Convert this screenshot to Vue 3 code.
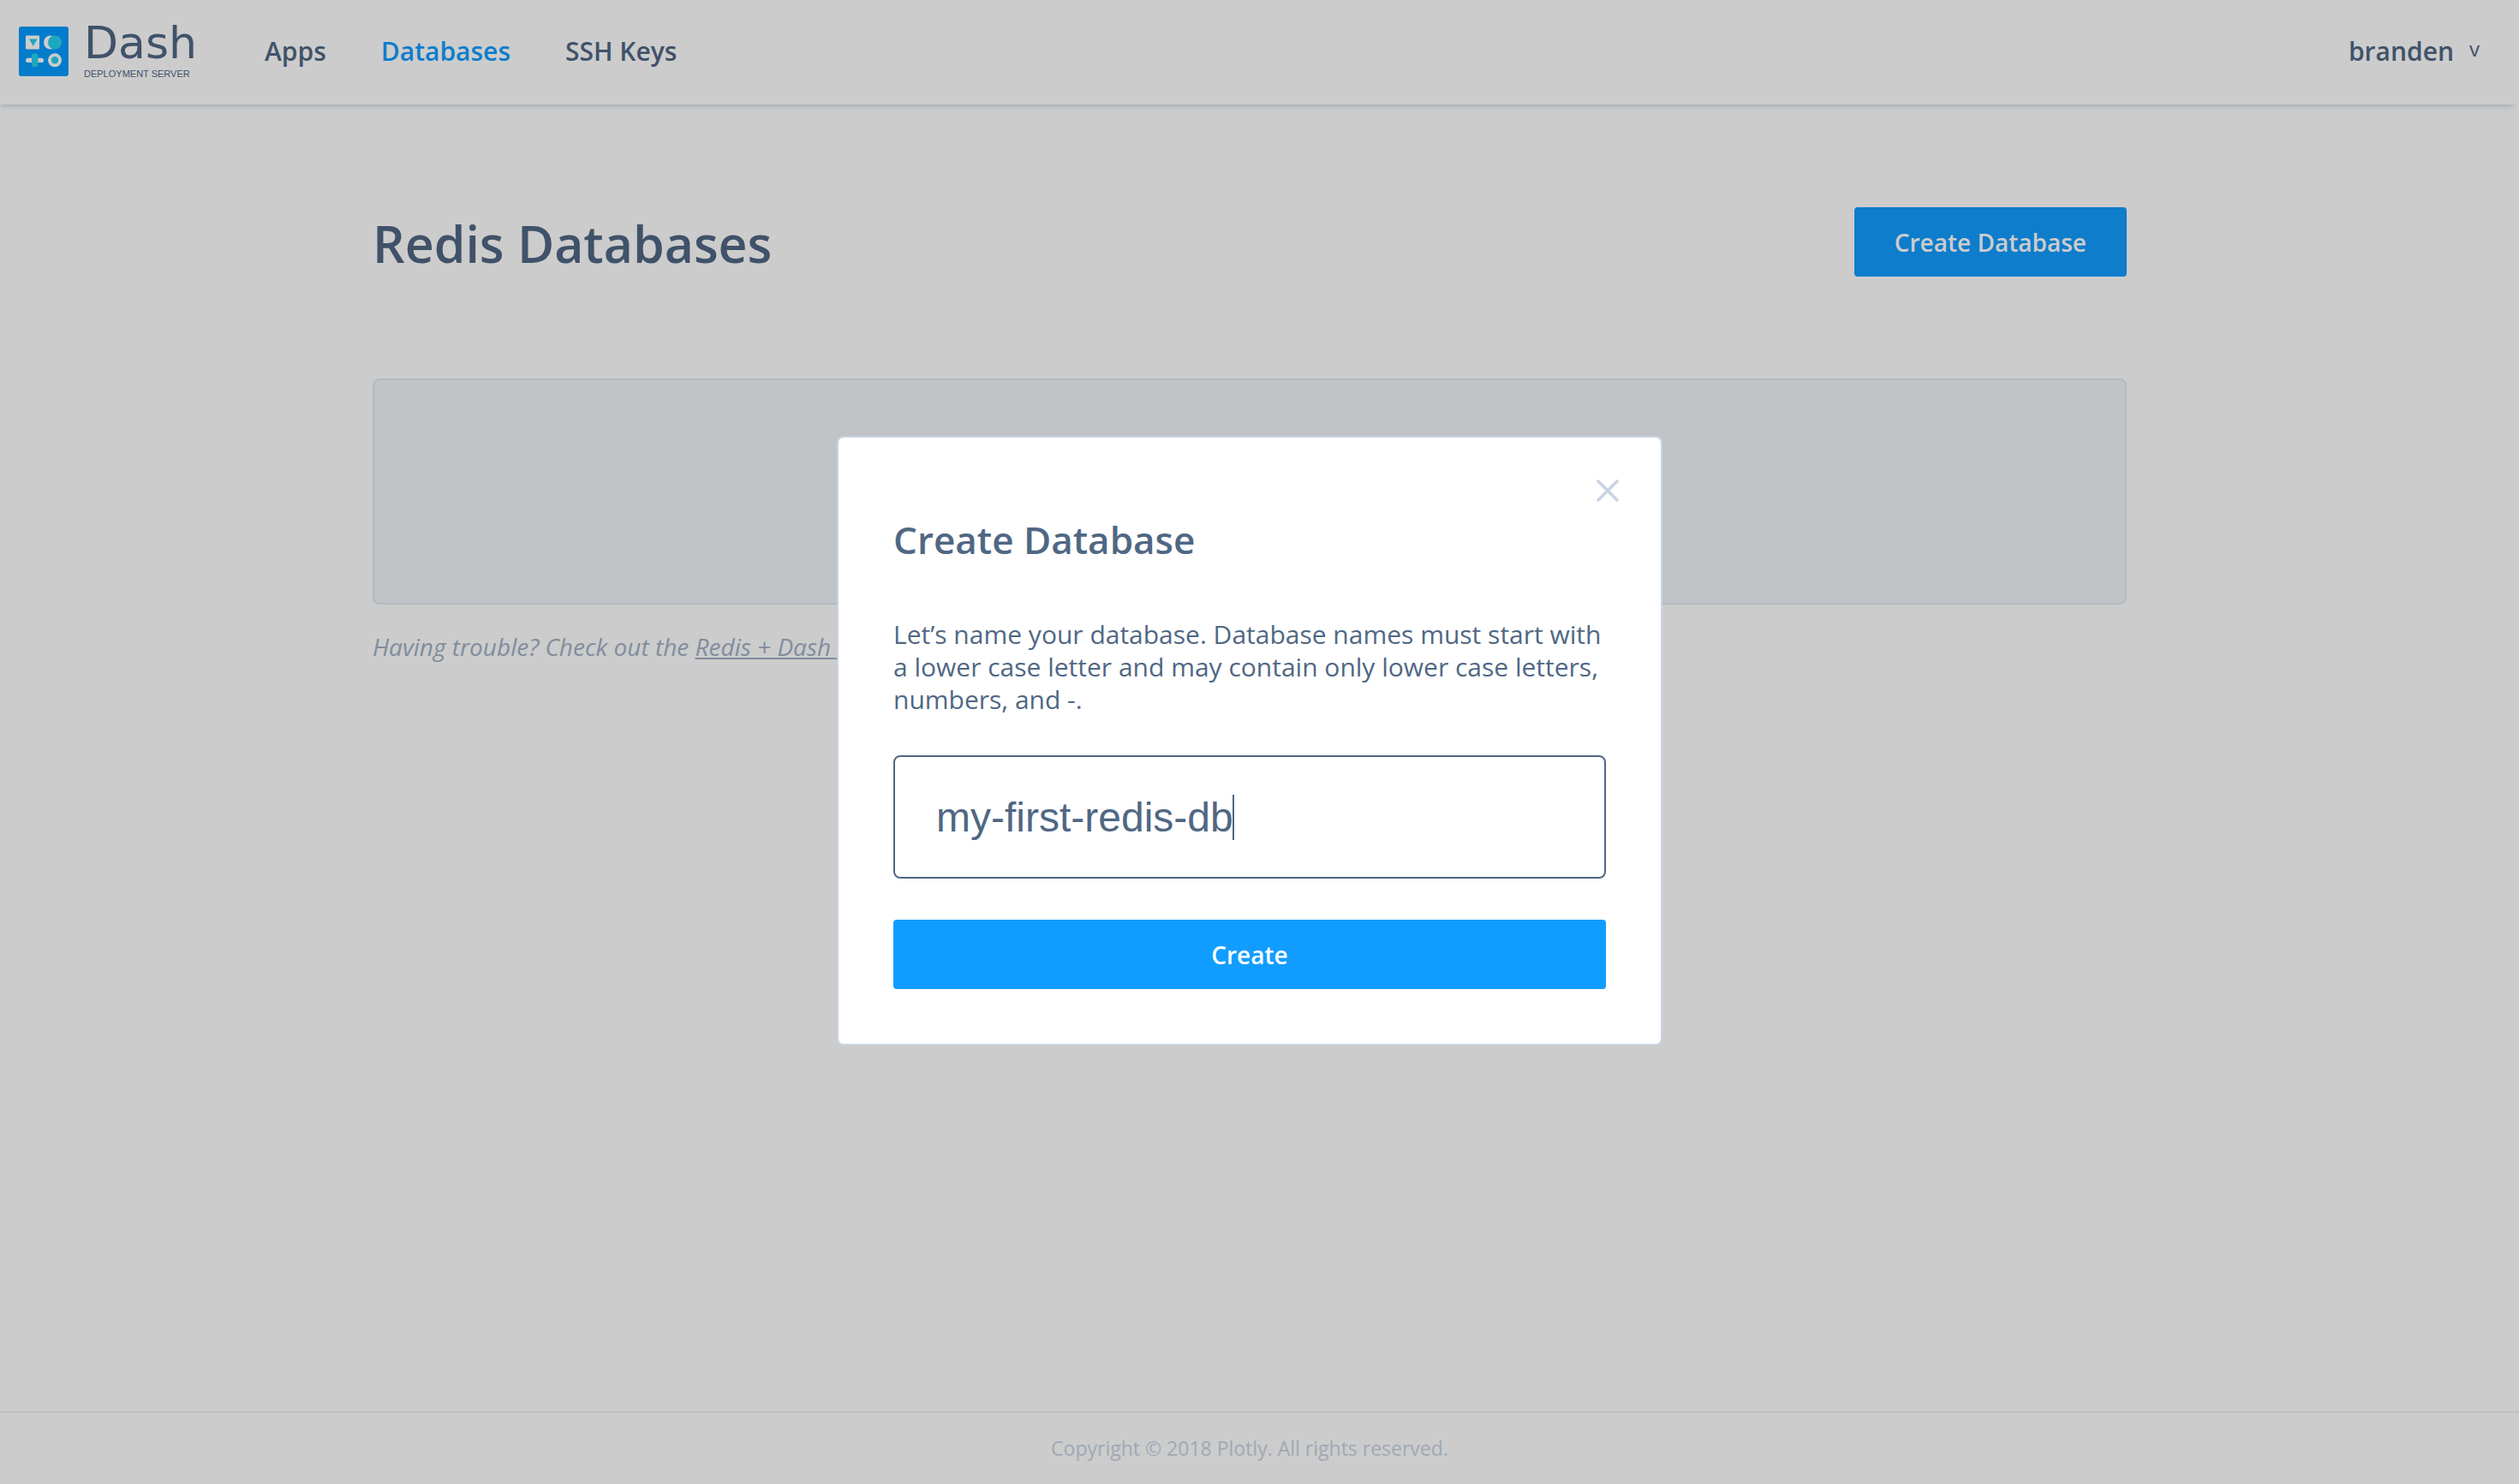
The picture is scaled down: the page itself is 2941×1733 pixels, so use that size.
<script setup>
import { ref } from 'vue'

const links = ref([
  { label: 'Apps', active: false },
  { label: 'Databases', active: true },
  { label: 'SSH Keys', active: false },
])
const name = ref('my-first-redis-db')
</script>

<template>
  <div class="page">
    <header class="topbar">
      <a class="brand" href="#" aria-label="Dash Deployment Server">
        <svg class="mark" viewBox="0 0 58 58" aria-hidden="true">
          <rect width="58" height="58" rx="3" fill="#059bff" />
          <rect x="8" y="10.5" width="16" height="16" rx="1" fill="#fff" />
          <path d="M12 14.5h9.6l-4.8 8.5z" fill="#25d2f0" />
          <circle cx="37" cy="18.5" r="8" fill="#fff" />
          <circle cx="42" cy="18.5" r="8" fill="#25d2f0" />
          <rect x="8" y="36.7" width="21" height="5.4" rx="2.7" fill="#fff" />
          <rect x="15" y="31.3" width="7.4" height="16" rx="3.7" fill="#25d2f0" />
          <circle cx="42" cy="39.3" r="8" fill="#fff" />
          <circle cx="42" cy="39.3" r="4.2" fill="#25d2f0" />
        </svg>
        <span class="wordmark">
          <span class="word">Dash</span>
          <span class="tagline">DEPLOYMENT SERVER</span>
        </span>
      </a>
      <nav class="nav">
        <a v-for="link in links" :key="link.label" href="#" :class="{ active: link.active }">{{ link.label }}</a>
      </nav>
      <button class="user" type="button">branden <span class="chevron">v</span></button>
    </header>

    <main class="content">
      <div class="title-row">
        <h1>Redis Databases</h1>
        <button class="btn" type="button">Create Database</button>
      </div>
      <div class="panel"></div>
      <p class="help">Having trouble? Check out the <a href="#">Redis + Dash docs</a></p>
    </main>

    <footer class="footer">Copyright © 2018 Plotly. All rights reserved.</footer>

    <div class="overlay">
      <form class="modal" role="dialog" aria-labelledby="modal-title" @submit.prevent>
        <button class="close" type="button" aria-label="Close">
          <svg viewBox="0 0 26 26" aria-hidden="true">
            <path d="M2 2 24 24M24 2 2 24" stroke="#c8d4e3" stroke-width="3.6" stroke-linecap="round" />
          </svg>
        </button>
        <h2 id="modal-title">Create Database</h2>
        <label for="db-name">Let’s name your database. Database names must start with a lower case letter and may contain only lower case letters, numbers, and -.</label>
        <div class="field">
          <input id="db-name" v-model="name" type="text" autocomplete="off" spellcheck="false" />
          <span class="caret"></span>
        </div>
        <button class="btn" type="submit">Create</button>
      </form>
    </div>
  </div>
</template>

<style>
body {
  margin: 0;
  background: #fff;
}
</style>

<style scoped>
.page {
  display: flex;
  flex-direction: column;
  min-height: 100vh;
  color: #506784;
  font-family: "Open Sans", "Noto Sans", sans-serif;
  font-size: 30px;
}
a {
  color: inherit;
  text-decoration: none;
}
button {
  border: 0;
  font-family: inherit;
  cursor: pointer;
}
.topbar {
  display: flex;
  align-items: center;
  height: 122px;
  padding: 0 46px 2px 22px;
  box-sizing: border-box;
  box-shadow: -3px 6px 6px -4px rgba(80, 103, 132, 0.28);
}
.brand {
  display: flex;
  align-items: center;
  gap: 18px;
}
.mark {
  width: 58px;
  height: 58px;
}
.wordmark {
  display: flex;
  flex-direction: column;
  gap: 8px;
}
.word {
  font: 52px/44px "DejaVu Sans", sans-serif;
}
.tagline {
  font: 11px/12px "Liberation Sans", Arial, sans-serif;
}
.nav {
  display: flex;
  gap: 64px;
  margin-left: 79px;
  font-weight: 600;
  line-height: 40px;
}
.nav .active {
  color: #119dff;
}
.user {
  display: flex;
  align-items: flex-start;
  gap: 18px;
  margin-left: auto;
  padding: 0;
  background: none;
  color: inherit;
  font-size: 30px;
  font-weight: 600;
  line-height: 40px;
}
.chevron {
  font-size: 24px;
  font-weight: 400;
  line-height: 34px;
}
.content {
  flex: 1;
  width: calc(100% - 24px);
  max-width: 2048px;
  margin: 0 auto;
  padding: 120px 23px 0 0;
}
.title-row {
  display: flex;
  align-items: flex-start;
  justify-content: space-between;
}
h1 {
  margin: 0;
  font-size: 59px;
  font-weight: 600;
  line-height: 84px;
}
.btn {
  height: 81px;
  padding: 0 47px;
  border-radius: 4px;
  background: #119dff;
  color: #fff;
  font-size: 28px;
  font-weight: 600;
}
.panel {
  height: 260px;
  margin-top: 116px;
  border: 2px solid #dfe8f1;
  border-radius: 8px;
  background: #f1f6f8;
}
.help {
  margin: 30px 0 0;
  color: #a2b1c6;
  font-size: 28px;
  font-style: italic;
  line-height: 38px;
}
.help a {
  text-decoration: underline;
}
.footer {
  padding: 23px 23px 24px 0;
  border-top: 2px solid #ebf0f5;
  color: #c8d4e3;
  font-size: 23px;
  line-height: 36px;
  text-align: center;
}
.overlay {
  position: fixed;
  inset: 0;
  display: flex;
  align-items: center;
  justify-content: center;
  padding: 0 23px 3px 0;
  background: rgba(0, 0, 0, 0.2);
}
.modal {
  position: relative;
  display: flex;
  flex-direction: column;
  width: 832px;
  padding: 87px 64px 64px;
  border: 2px solid #c8d4e3;
  border-radius: 8px;
  background: #fff;
}
.close {
  position: absolute;
  top: 49px;
  right: 49px;
  padding: 0;
  background: none;
}
.close svg {
  display: block;
  width: 26px;
  height: 26px;
}
h2 {
  margin: 0 0 60px;
  font-size: 44px;
  font-weight: 600;
  line-height: 64px;
}
label {
  line-height: 38px;
}
.field {
  position: relative;
  margin: 46px 0 48px;
}
input {
  display: block;
  width: 100%;
  height: 144px;
  padding: 0 48px;
  box-sizing: border-box;
  border: 2px solid #506784;
  border-radius: 8px;
  outline: 0;
  background: #fff;
  color: inherit;
  font: 48px "Liberation Sans", Arial, sans-serif;
}
.caret {
  position: absolute;
  top: 46px;
  left: 396px;
  width: 2px;
  height: 53px;
  background: #506784;
}
</style>
